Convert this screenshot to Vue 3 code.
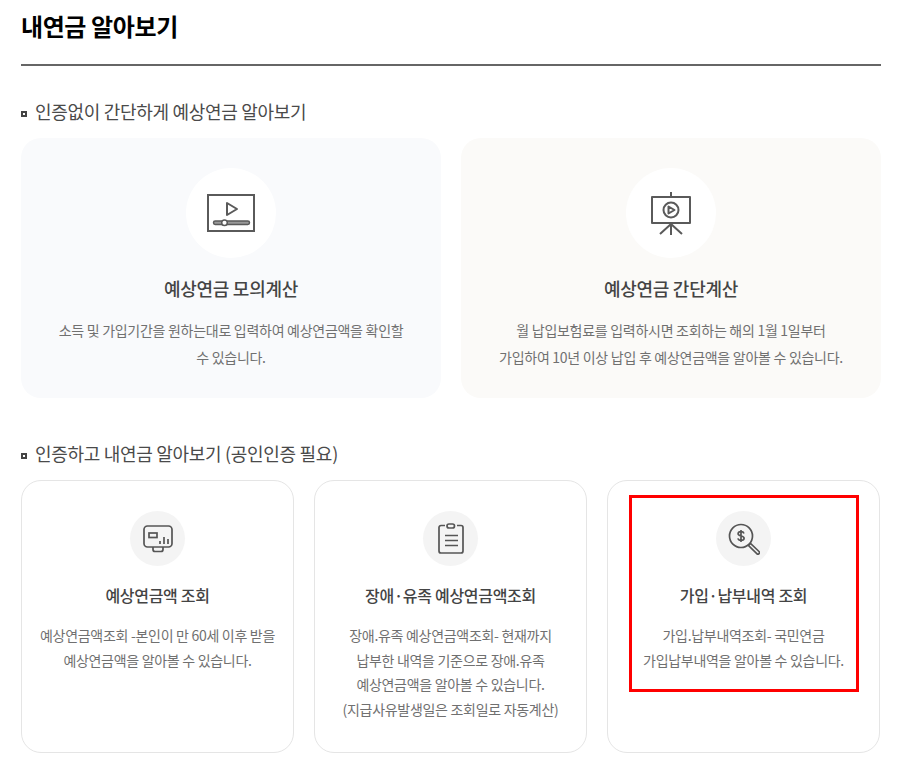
<template>
  <div class="page">
    <h1 class="page-title">내연금 알아보기</h1>

    <h2 class="sec-title first">인증없이 간단하게 예상연금 알아보기</h2>
    <div class="big-row">
      <div v-for="c in bigCards" :key="c.title" class="big-card" :class="c.tone">
        <div class="big-icon">
          <svg v-if="c.icon === 'video'" width="48" height="38" viewBox="0 0 48 38" fill="none" stroke="#5a5a5a">
            <rect x="1" y="1" width="46" height="36" stroke-width="2" />
            <path d="M20 9v12l10-6z" stroke-width="2" stroke-linejoin="round" />
            <rect x="6.500" y="27" width="36" height="3.500" rx="1.700" fill="#999" stroke-width="1.500" />
            <circle cx="17.500" cy="28.700" r="2.800" fill="#fff" stroke-width="1.500" />
          </svg>
          <svg v-else width="42" height="44" viewBox="0 0 42 44" fill="none" stroke="#5a5a5a" stroke-width="2">
            <path d="M21 1v5" />
            <rect x="2" y="6" width="38" height="26" stroke-linejoin="round" />
            <circle cx="21" cy="19" r="7.500" />
            <path d="M18.500 15.500v7l6-3.500z" stroke-linejoin="round" />
            <path d="M21 32v12M21 33L10 43M21 33l11 10" />
          </svg>
        </div>
        <h3 class="big-title">{{ c.title }}</h3>
        <p v-for="line in c.lines" :key="line" class="desc">{{ line }}</p>
      </div>
    </div>

    <h2 class="sec-title second">인증하고 내연금 알아보기 (공인인증 필요)</h2>
    <div class="small-row">
      <div v-for="c in smallCards" :key="c.title" class="small-card">
        <div class="small-icon">
          <svg v-if="c.icon === 'monitor'" width="30" height="28" viewBox="0 0 30 28" fill="none" stroke="#555" stroke-width="1.700">
            <rect x="1" y="1" width="28" height="21" rx="3.500" />
            <rect x="6" y="8" width="8" height="4.500" />
            <path d="M17 19v-3M21 19v-7M25 19v-5" />
            <path d="M10 22v2.500a2 2 0 0 0 2 2h6a2 2 0 0 0 2-2V22" />
          </svg>
          <svg v-else-if="c.icon === 'clip'" width="26" height="31" viewBox="0 0 26 31" fill="none" stroke="#555" stroke-width="1.700">
            <path d="M7 2.500H3a2 2 0 0 0-2 2V28a2 2 0 0 0 2 2h20a2 2 0 0 0 2-2V4.500a2 2 0 0 0-2-2h-4" />
            <rect x="9" y="1" width="7.500" height="4" rx="2" />
            <path d="M7 12.500h13M7 17.500h13M7 22.500h13" />
          </svg>
          <svg v-else width="32" height="32" viewBox="0 0 32 32" fill="none" stroke="#555" stroke-width="1.700">
            <circle cx="13" cy="13" r="11.500" />
            <path d="M16 10.500c-.4-1.200-1.600-1.800-3-1.800s-2.900.7-2.900 2.100c0 3 6 1.400 6 4.400 0 1.400-1.500 2.100-3.100 2.100s-2.800-.7-3.100-1.900M13 7v12" />
            <path d="M20.500 22.500l2-2 8.500 8a1.500 1.500 0 0 1-2.200 2.200z" />
          </svg>
        </div>
        <h3 class="small-title">{{ c.title }}</h3>
        <p v-for="line in c.lines" :key="line" class="desc small">{{ line }}</p>
        <div v-if="c.marked" class="mark"></div>
      </div>
    </div>
  </div>
</template>

<script setup>
const bigCards = [
  {
    title: '예상연금 모의계산',
    icon: 'video',
    tone: 'cool',
    lines: ['소득 및 가입기간을 원하는대로 입력하여 예상연금액을 확인할', '수 있습니다.']
  },
  {
    title: '예상연금 간단계산',
    icon: 'board',
    tone: 'warm',
    lines: ['월 납입보험료를 입력하시면 조회하는 해의 1월 1일부터', '가입하여 10년 이상 납입 후 예상연금액을 알아볼 수 있습니다.']
  }
]

const smallCards = [
  {
    title: '예상연금액 조회',
    icon: 'monitor',
    lines: ['예상연금액조회 -본인이 만 60세 이후 받을', '예상연금액을 알아볼 수 있습니다.']
  },
  {
    title: '장애·유족 예상연금액조회',
    icon: 'clip',
    lines: ['장애.유족 예상연금액조회- 현재까지', '납부한 내역을 기준으로 장애.유족', '예상연금액을 알아볼 수 있습니다.', '(지급사유발생일은 조회일로 자동계산)']
  },
  {
    title: '가입·납부내역 조회',
    icon: 'search',
    marked: true,
    lines: ['가입.납부내역조회- 국민연금', '가입납부내역을 알아볼 수 있습니다.']
  }
]
</script>

<style>
html,
body {
  background: #fff;
}
</style>

<style scoped>
.page {
  width: 860px;
  height: 763px;
  margin-left: 21px;
  overflow: hidden;
  font-family: "Noto Sans CJK KR", "Noto Sans", sans-serif;
  color: #444;
}
.page-title {
  margin: 0;
  height: 66px;
  padding-top: 8px;
  box-sizing: border-box;
  border-bottom: 2px solid #666;
  font-size: 24px;
  line-height: 36px;
  font-weight: 700;
  letter-spacing: -0.4px;
  color: #000;
}
.sec-title {
  margin: 0;
  position: relative;
  padding-left: 14px;
  font-size: 18px;
  line-height: 26px;
  font-weight: 400;
  letter-spacing: -0.3px;
  color: #4a4a4a;
}
.sec-title::before {
  content: "";
  position: absolute;
  left: 0;
  top: 13px;
  width: 2px;
  height: 2px;
  border: 2px solid #444;
}
.sec-title.first {
  margin-top: 32px;
}
.sec-title.second {
  margin-top: 42px;
}
.big-row {
  display: flex;
  gap: 20px;
  margin-top: 14px;
}
.big-card {
  flex: 1;
  height: 260px;
  padding-top: 30px;
  box-sizing: border-box;
  border-radius: 20px;
  text-align: center;
}
.big-card.cool {
  background: #f9fafc;
}
.big-card.warm {
  background: #fbfaf8;
}
.big-icon {
  width: 90px;
  height: 90px;
  margin: 0 auto;
  border-radius: 50%;
  background: #fff;
  display: flex;
  align-items: center;
  justify-content: center;
}
.big-title {
  margin: 16px 0 15px;
  font-size: 18px;
  line-height: 28px;
  font-weight: 500;
  letter-spacing: -0.3px;
  color: #444;
}
.desc {
  margin: 0;
  font-size: 14px;
  line-height: 26.500px;
  letter-spacing: -0.28px;
  color: #707070;
}
.small-row {
  display: flex;
  gap: 20px;
  margin-top: 14px;
  padding-right: 1px;
}
.small-card {
  position: relative;
  flex: 1;
  height: 273px;
  padding-top: 30px;
  box-sizing: border-box;
  border: 1px solid #e5e5e5;
  border-radius: 20px;
  text-align: center;
}
.small-icon {
  width: 55px;
  height: 55px;
  margin: 0 auto;
  border-radius: 50%;
  background: #f4f4f4;
  display: flex;
  align-items: center;
  justify-content: center;
}
.small-title {
  margin: 16px 0 15px;
  font-size: 16px;
  line-height: 26px;
  font-weight: 500;
  letter-spacing: -0.3px;
  color: #444;
}
.desc.small {
  font-size: 14px;
  line-height: 24.500px;
  letter-spacing: -0.3px;
}
.mark {
  position: absolute;
  left: 21px;
  top: 14px;
  width: 230px;
  height: 197px;
  box-sizing: border-box;
  border: 3px solid #f00;
}
</style>
